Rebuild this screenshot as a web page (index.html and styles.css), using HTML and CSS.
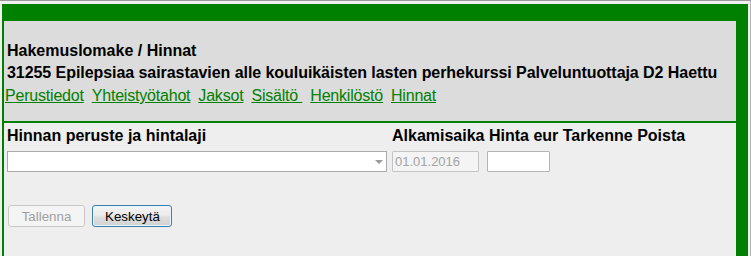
FILE: index.html
```html
<!DOCTYPE html>
<html lang="fi">
<head>
<meta charset="utf-8">
<title>Hakemuslomake / Hinnat</title>
<link rel="stylesheet" href="styles.css">
</head>
<body>
<div class="window">
  <div class="frame">
    <div class="header">
      <div class="title">Hakemuslomake / Hinnat</div>
      <div class="title title-long">31255 Epilepsiaa sairastavien alle kouluikäisten lasten perhekurssi Palveluntuottaja D2 Haettu</div>
      <nav class="tabs">
        <a href="#">Perustiedot</a>
        <a href="#">Yhteistyötahot</a>
        <a href="#">Jaksot</a>
        <a href="#">Sisältö&nbsp;</a>
        <a href="#">Henkilöstö</a>
        <a href="#">Hinnat</a>
      </nav>
    </div>
    <div class="content">
      <div class="row">
        <div class="col col-main">
          <div class="label">Hinnan peruste ja hintalaji</div>
          <div class="select-wrap">
            <select class="select"><option></option></select>
          </div>
        </div>
        <div class="col">
          <div class="label">Alkamisaika Hinta eur Tarkenne Poista</div>
          <div class="inputs">
            <input class="field field-date" type="text" value="01.01.2016" disabled>
            <input class="field field-price" type="text">
          </div>
        </div>
      </div>
      <div class="actions">
        <button class="btn btn-disabled" disabled>Tallenna</button>
        <button class="btn btn-primary">Keskeytä</button>
      </div>
    </div>
  </div>
</div>
</body>
</html>
```
FILE: styles.css
```css
html, body {
  margin: 0;
  padding: 0;
  background: #f0f0f0;
}

.window {
  box-sizing: border-box;
  height: 256px;
  width: 751px;
  border-top: 1px solid #9a9a9a;
  border-right: 1px solid #b4b4b4;
  padding: 3px 0 0 2px;
  display: flex;
  flex-direction: column;
  font-family: "Liberation Sans", Arial, sans-serif;
}

.frame {
  box-sizing: border-box;
  width: 746px;
  flex: 1;
  display: flex;
  flex-direction: column;
  border-top: 17px solid #008000;
  border-left: 2px solid #008000;
  border-right: 12px solid #008000;
}

.header {
  background: #dcdcdc;
  box-sizing: border-box;
  padding: 19px 0 0 3px;
  border-bottom: 2px solid #008000;
  height: 102px;
}

.title {
  font-size: 16px;
  font-weight: bold;
  line-height: 22px;
  color: #000;
  white-space: nowrap;
}

.title-long {
  letter-spacing: -0.06px;
}

.tabs {
  display: flex;
  gap: 8px;
  margin-left: -2px;
  font-size: 16px;
  line-height: 23px;
  letter-spacing: -0.2px;
}

.tabs a {
  color: #008000;
  text-decoration: underline;
  white-space: pre;
}

.content {
  flex: 1;
  background: #eeeeee;
  padding: 4px 0 0 3px;
}

.row {
  display: flex;
  gap: 5px;
}

.col-main {
  width: 380px;
}

.label {
  font-size: 16px;
  font-weight: bold;
  line-height: 18px;
  color: #000;
  white-space: nowrap;
  margin-bottom: 6px;
}

.select-wrap {
  position: relative;
  width: 380px;
  height: 21px;
}

.select {
  appearance: none;
  -webkit-appearance: none;
  box-sizing: border-box;
  width: 380px;
  height: 21px;
  margin: 0;
  border: 1px solid #ababab;
  border-radius: 0;
  background: #ffffff;
  font-family: "Liberation Sans", Arial, sans-serif;
  font-size: 13px;
}

.select-wrap::after {
  content: "";
  position: absolute;
  right: 4px;
  top: 9px;
  border-left: 4px solid transparent;
  border-right: 4px solid transparent;
  border-top: 4px solid #9a9a9a;
}

.inputs {
  display: flex;
  gap: 8px;
}

.field {
  box-sizing: border-box;
  height: 21px;
  margin: 0;
  padding: 0 2px;
  border: 1px solid #b4b4b4;
  border-radius: 1px;
  font-family: "Liberation Sans", Arial, sans-serif;
  font-size: 13px;
  background: #ffffff;
}

.field-date {
  width: 87px;
  background: #f4f4f4;
  color: #a3a3a3;
  border-color: #c4c4c4;
}

.field-price {
  width: 63px;
}

.actions {
  display: flex;
  gap: 7px;
  margin: 33px 0 0 1px;
}

.btn {
  box-sizing: border-box;
  height: 22px;
  margin: 0;
  padding: 0 12px;
  border-radius: 3px;
  font-family: "Liberation Sans", Arial, sans-serif;
  font-size: 13.33px;
}

.btn-disabled {
  width: 77px;
  border: 1px solid #c8c8c8;
  background: #f4f4f4;
  color: #a0a0a0;
}

.btn-primary {
  width: 80px;
  border: 1px solid #3c7fb1;
  background: linear-gradient(#f4f4f4 0%, #ececec 45%, #dedede 55%, #d2d2d2 100%);
  box-shadow: inset 0 0 0 1px #e8f4fc;
  color: #000;
}
```
